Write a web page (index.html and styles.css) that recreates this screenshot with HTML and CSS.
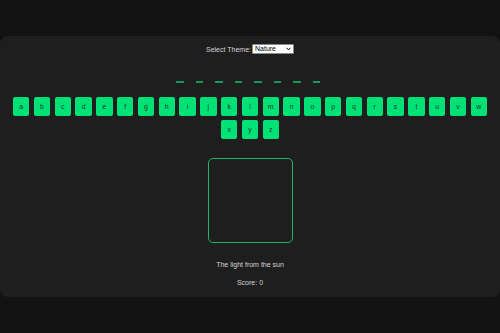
FILE: index.html
```html
<!DOCTYPE html>
<html lang="en">
<head>
    <meta charset="UTF-8">
    <meta name="viewport" content="width=device-width, initial-scale=1.0">
    <title>Hangman</title>
    <link rel="stylesheet" href="styles.css">
</head>

<body>

    <!-- Game Container -->
    <div class="game">

        <!-- Theme Picker -->
        <div class="theme">
            <label for="theme">Select Theme:</label>
            <div class="picker">
                <select id="theme">
                    <option>Nature</option>
                    <option>Animals</option>
                    <option>Food</option>
                </select>
                <svg class="arrow" width="5" height="4" viewBox="0 0 5 4">
                    <path d="M0.6 0.8 L2.5 2.8 L4.4 0.8" fill="none" stroke="#000" stroke-width="1"/>
                </svg>
            </div>
        </div>

        <!-- Hidden Word -->
        <div class="word">
            <span class="dash"></span>
            <span class="dash"></span>
            <span class="dash"></span>
            <span class="dash"></span>
            <span class="dash"></span>
            <span class="dash"></span>
            <span class="dash"></span>
            <span class="dash"></span>
        </div>

        <!-- Letter Buttons -->
        <div class="keyboard">
            <button>a</button>
            <button>b</button>
            <button>c</button>
            <button>d</button>
            <button>e</button>
            <button>f</button>
            <button>g</button>
            <button>h</button>
            <button>i</button>
            <button>j</button>
            <button>k</button>
            <button>l</button>
            <button>m</button>
            <button>n</button>
            <button>o</button>
            <button>p</button>
            <button>q</button>
            <button>r</button>
            <button>s</button>
            <button>t</button>
            <button>u</button>
            <button>v</button>
            <button>w</button>
            <button>x</button>
            <button>y</button>
            <button>z</button>
        </div>

        <!-- Hangman Drawing -->
        <div class="gallows"></div>

        <!-- Hint + Score -->
        <p class="hint">The light from the sun</p>
        <p class="score">Score: 0</p>

    </div>

</body>
</html>
```

FILE: styles.css
```css
body {
    font-family: "Liberation Sans", Arial, sans-serif;
    margin: 0;
    background-color: #121212;
    color: #d4d4d4;
}

/* Game Container */
.game {
    margin-top: 36px;
    padding: 8px 0 9px;
    background-color: #1e1e1e;
    border-radius: 8px;
    text-align: center;
}

/* Theme Picker */
.theme {
    display: flex;
    justify-content: center;
    align-items: center;
    gap: 1px;
    height: 10px;
    font-size: 7px;
}

.picker {
    position: relative;
    width: 42px;
    height: 10px;
}

.picker select {
    appearance: none;
    -webkit-appearance: none;
    display: block;
    width: 42px;
    height: 10px;
    margin: 0;
    padding: 0 0 0 2px;
    font-family: "Liberation Sans", Arial, sans-serif;
    font-size: 7px;
    line-height: 8px;
    color: #000;
    background-color: #fff;
    border: 1px solid #8a8a8a;
    border-radius: 1px;
    text-align: left;
}

.arrow {
    position: absolute;
    right: 3px;
    top: 3px;
    pointer-events: none;
}

/* Hidden Word */
.word {
    display: flex;
    justify-content: center;
    gap: 12px;
    margin-top: 27px;
    padding-right: 4px;
}

.dash {
    width: 7.5px;
    height: 2px;
    background-color: #17975a;
}

/* Letter Buttons */
.keyboard {
    display: flex;
    flex-wrap: wrap;
    justify-content: center;
    margin-top: 11.5px;
    padding: 0 10px;
}

.keyboard button {
    width: 16.3px;
    height: 19px;
    margin: 2.25px;
    padding: 0;
    background-color: #00e276;
    color: #1a3526;
    border: none;
    border-radius: 2px;
    font-family: "Liberation Sans", Arial, sans-serif;
    font-size: 7px;
    cursor: pointer;
}

/* Hangman Drawing */
.gallows {
    width: 83px;
    height: 82.5px;
    margin: 16.5px auto 0;
    border: 1px solid #22b466;
    border-radius: 5px;
}

/* Hint + Score */
.hint,
.score {
    margin: 0;
    height: 10px;
    line-height: 10px;
    font-size: 7px;
}

.hint {
    margin-top: 17px;
}

.score {
    margin-top: 8.3px;
}
```
